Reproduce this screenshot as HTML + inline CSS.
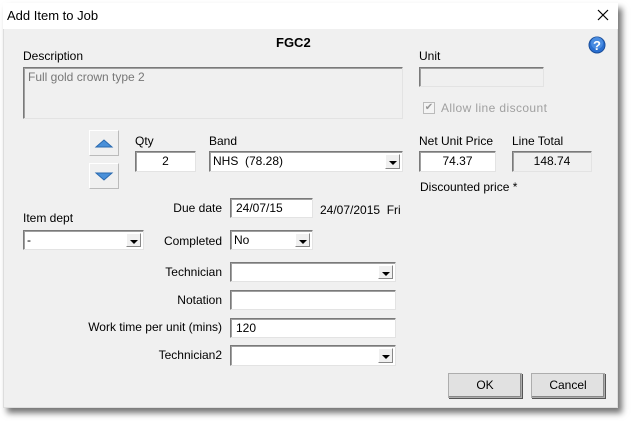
<!DOCTYPE html>
<html><head><style>
*{box-sizing:border-box;margin:0;padding:0}
body{width:633px;height:421px;background:#fff;position:relative;overflow:hidden;font-family:"Liberation Sans",sans-serif;font-size:12px;color:#000}
.a{position:absolute}
#dlg{left:3px;top:3px;width:615px;height:405px;background:#f0f0f0;box-shadow:4px 5px 6px rgba(0,0,0,.55);border:1px solid #ddd}
#title{left:3px;top:3px;width:615px;height:26px;background:#fff}
.box{position:absolute;background:#fff;border:1px solid #7a7a7a;border-right-color:#e3e3e3;border-bottom-color:#e3e3e3;box-shadow:inset 1px 1px 0 #a0a0a0;padding:2px 4px;line-height:15px;white-space:nowrap}
.gray{background:#f0f0f0}
.dd{position:absolute;right:2px;top:2px;bottom:2px;width:15px;background:#f0f0f0;border:1px solid #fff;border-right-color:#888;border-bottom-color:#888}
.dd:after{content:"";position:absolute;left:3px;top:6px;border-left:4px solid transparent;border-right:4px solid transparent;border-top:4px solid #000}
.lbl{position:absolute;white-space:nowrap}
.r{text-align:right;width:200px}
.btn{position:absolute;background:#e1e1e1;border:1px solid #adadad;box-shadow:inset -1px -1px 0 #888,1px 1px 0 #555;text-align:center;line-height:23px}
.arr{position:absolute;width:30px;height:26px;background:#f0f0f0;border:1px solid #fff;border-right-color:#bbb;border-bottom-color:#bbb}
</style></head><body>
<div id="dlg" class="a"></div>
<div id="title" class="a"></div>
<div class="lbl" style="left:7px;top:8px;font-size:13px">Add Item to Job</div>
<svg class="a" style="left:597px;top:9px" width="12" height="12"><path d="M1 1L11 11M11 1L1 11" stroke="#000" stroke-width="1.2"/></svg>
<div class="lbl" style="left:276px;top:35px;font-weight:bold;font-size:13px">FGC2</div>
<svg class="a" style="left:588px;top:36px" width="18" height="18"><circle cx="9" cy="9" r="8" fill="#2a6fd0" stroke="#1a4e9a"/><circle cx="9" cy="7" r="6" fill="#5fa0ec" opacity=".6"/><text x="9" y="14" font-size="13" font-weight="bold" fill="#fff" text-anchor="middle" font-family="Liberation Sans">?</text></svg>
<div class="lbl" style="left:23px;top:49px">Description</div>
<div class="box gray" style="left:23px;top:67px;width:380px;height:52px;color:#777">Full gold crown type 2</div>
<div class="lbl" style="left:419px;top:49px">Unit</div>
<div class="box gray" style="left:419px;top:67px;width:125px;height:20px"></div>
<div class="a" style="left:423px;top:102px;width:12px;height:12px;border:1px solid #bbb;background:#f4f4f4;color:#999;font-size:10px;line-height:10px;text-align:center">✔</div>
<div class="lbl" style="left:441px;top:101px;color:#a0a0a0;letter-spacing:.4px">Allow line discount</div>
<div class="arr" style="left:89px;top:130px"><svg width="28" height="24"><path d="M6 16L14 9L22 16Z" fill="#4a90d9" stroke="#2a6ab0"/></svg></div>
<div class="arr" style="left:89px;top:163px"><svg width="28" height="24"><path d="M6 9L14 16L22 9Z" fill="#4a90d9" stroke="#2a6ab0"/></svg></div>
<div class="lbl" style="left:135px;top:134px">Qty</div>
<div class="box" style="left:135px;top:151px;width:61px;height:21px;text-align:center">2</div>
<div class="lbl" style="left:209px;top:134px">Band</div>
<div class="box" style="left:209px;top:151px;width:194px;height:21px;padding-left:3px">NHS&nbsp; (78.28)<div class="dd"></div></div>
<div class="lbl" style="left:419px;top:134px">Net Unit Price</div>
<div class="box" style="left:419px;top:151px;width:77px;height:21px;text-align:center">74.37</div>
<div class="lbl" style="left:512px;top:134px">Line Total</div>
<div class="box gray" style="left:512px;top:151px;width:80px;height:21px;text-align:center">148.74</div>
<div class="lbl" style="left:420px;top:180px">Discounted price *</div>
<div class="lbl r" style="left:22px;top:201px">Due date</div>
<div class="box" style="left:230px;top:198px;width:83px;height:20px;padding-left:5px">24/07/15</div>
<div class="lbl" style="left:320px;top:203px">24/07/2015&nbsp; Fri</div>
<div class="lbl" style="left:23px;top:211px">Item dept</div>
<div class="box" style="left:23px;top:230px;width:121px;height:20px;padding-left:3px">-<div class="dd"></div></div>
<div class="lbl r" style="left:22px;top:234px">Completed</div>
<div class="box" style="left:230px;top:230px;width:83px;height:20px;padding-left:3px">No<div class="dd"></div></div>
<div class="lbl r" style="left:22px;top:265px">Technician</div>
<div class="box" style="left:230px;top:262px;width:166px;height:20px"><div class="dd"></div></div>
<div class="lbl r" style="left:22px;top:293px">Notation</div>
<div class="box" style="left:230px;top:290px;width:166px;height:20px"></div>
<div class="lbl r" style="left:22px;top:320px">Work time per unit (mins)</div>
<div class="box" style="left:230px;top:318px;width:166px;height:20px;padding-left:5px">120</div>
<div class="lbl r" style="left:22px;top:348px">Technician2</div>
<div class="box" style="left:230px;top:345px;width:166px;height:21px"><div class="dd"></div></div>
<div class="btn" style="left:448px;top:373px;width:74px;height:25px">OK</div>
<div class="btn" style="left:531px;top:373px;width:74px;height:25px">Cancel</div>
</body></html>
